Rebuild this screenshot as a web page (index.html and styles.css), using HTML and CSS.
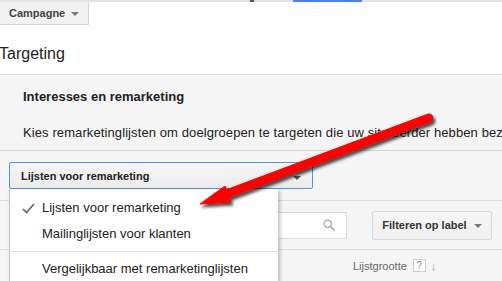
FILE: index.html
```html
<!DOCTYPE html>
<html>
<head>
  <title>Targeting</title>
  <link rel="stylesheet" href="styles.css">
</head>
<body>
  <div class="topbar">
    <span class="tab-mark"></span>
    <span class="tab-active"></span>
  </div>

  <button class="campaign-btn">Campagne <span class="caret"></span></button>

  <h1 class="page-title">Targeting</h1>

  <section class="panel">
    <h2>Interesses en remarketing</h2>
    <p>Kies remarketinglijsten om doelgroepen te targeten die uw site eerder hebben bezocht</p>

    <div class="panel-body">
      <div class="select-wrap">
        <button class="select">Lijsten voor remarketing <span class="caret"></span></button>
        <ul class="menu">
          <li>
            <svg class="check" width="13" height="11" viewBox="0 0 13 11">
              <path d="M1 6 L4.5 9.5 L12 1" fill="none" stroke="#666" stroke-width="1.7"/>
            </svg>
            Lijsten voor remarketing
          </li>
          <li>Mailinglijsten voor klanten</li>
          <li class="sep"></li>
          <li>Vergelijkbaar met remarketinglijsten</li>
        </ul>
      </div>

      <div class="toolbar">
        <div class="search">
          <svg width="12" height="12" viewBox="0 0 12 12">
            <circle cx="4.8" cy="4.8" r="3.6" fill="none" stroke="#bbb" stroke-width="1.8"/>
            <path d="M7.5 7.5 L11 11" stroke="#bbb" stroke-width="2.2" stroke-linecap="round"/>
          </svg>
        </div>
        <button class="filter-btn">Filteren op label <span class="caret"></span></button>
      </div>

      <div class="table-head">
        <span>Lijstgrootte</span>
        <span class="help">?</span>
        <span class="sort">&#8595;</span>
      </div>
    </div>
  </section>

  <!-- annotation arrow -->
  <svg class="annotation" width="502" height="281" viewBox="0 0 502 281">
    <defs>
      <filter id="shadow" x="-20%" y="-20%" width="140%" height="140%">
        <feDropShadow dx="2" dy="3" stdDeviation="1.5" flood-color="#000" flood-opacity="0.7"/>
      </filter>
    </defs>
    <g filter="url(#shadow)" fill="#f00" stroke="#f00">
      <line x1="429" y1="118" x2="224" y2="195" stroke-width="9" stroke-linecap="round"/>
      <polygon points="200,204 225,186 231,202" stroke-width="1" stroke-linejoin="round"/>
    </g>
  </svg>
</body>
</html>
```

FILE: styles.css
```css
* { box-sizing: border-box; margin: 0; padding: 0; }
body {
  font-family: 'Liberation Sans', Arial, sans-serif;
  background: #fff;
  color: #222;
  width: 502px;
  height: 281px;
  overflow: hidden;
  position: relative;
}

.topbar {
  display: flex;
  height: 2px;
  background: #e3e3e3;
}

.tab-mark {
  margin-left: 250px;
  width: 4px;
  background: #555;
}

.tab-active {
  margin-left: 39px;
  width: 69px;
  background: #4285f4;
}

.caret {
  display: inline-block;
  border-left: 4px solid transparent;
  border-right: 4px solid transparent;
  border-top: 4px solid #777;
  vertical-align: middle;
  margin-left: 4px;
}

button {
  font-family: inherit;
  cursor: pointer;
}

.campaign-btn {
  display: block;
  width: 89px;
  height: 23px;
  padding-left: 9px;
  text-align: left;
  font-size: 11px;
  font-weight: bold;
  color: #444;
  background: #f1f1f1;
  border: none;
  border-right: 1px solid #d6d6d6;
  border-bottom: 1px solid #d6d6d6;
}

.campaign-btn .caret {
  margin-left: 3px;
}

.page-title {
  font-size: 16px;
  font-weight: normal;
  line-height: 20px;
  margin: 19px 0 10px -1px;
  color: #222;
}

.panel {
  background: #f5f5f5;
  border-top: 1px solid #dcdcdc;
  height: 207px;
}

.panel h2 {
  font-size: 13px;
  line-height: 16px;
  padding: 14px 0 0 23px;
  color: #222;
}

.panel p {
  font-size: 13px;
  line-height: 16px;
  margin-top: 20px;
  padding-left: 23px;
  white-space: nowrap;
  letter-spacing: 0.1px;
  color: #222;
}

.panel-body {
  margin-top: 9px;
  border-top: 1px solid #d4d4d4;
  padding-top: 11px;
}

.select-wrap {
  position: relative;
  margin-left: 9px;
  width: 304px;
}

.select {
  display: flex;
  align-items: center;
  width: 304px;
  height: 27px;
  padding: 0 11px;
  font-size: 11px;
  font-weight: bold;
  color: #222;
  background: linear-gradient(#f6f6f6, #ebebeb);
  border: 1px solid #4d90fe;
  border-radius: 2px;
}

.select .caret {
  margin-left: auto;
  margin-top: 4px;
  border-top-color: #555;
}

.menu {
  position: absolute;
  top: 27px;
  left: 0;
  width: 269px;
  list-style: none;
  background: #fff;
  border-left: 1px solid #c8c8c8;
  box-shadow: 2px 2px 4px rgba(0,0,0,0.25);
  padding-top: 6px;
  z-index: 2;
}

.menu li {
  height: 26px;
  line-height: 26px;
  padding-left: 32px;
  font-size: 13px;
  color: #222;
  white-space: nowrap;
  position: relative;
}

.menu .check {
  position: absolute;
  left: 12px;
  top: 8px;
}

.menu li.sep {
  height: 1px;
  margin: 4px 0;
  background: #e2e2e2;
}

.toolbar {
  display: flex;
  align-items: center;
  margin-top: 11px;
  height: 50px;
  border-top: 1px solid #dcdcdc;
  border-bottom: 1px solid #dcdcdc;
  padding-left: 9px;
}

.search {
  display: flex;
  align-items: center;
  justify-content: flex-end;
  width: 338px;
  height: 27px;
  padding-right: 11px;
  background: #fff;
  border: 1px solid #dadada;
}

.filter-btn {
  margin-left: 25px;
  width: 120px;
  height: 29px;
  font-size: 11px;
  font-weight: bold;
  color: #333;
  background: linear-gradient(#f6f6f6, #f0f0f0);
  border: 1px solid #dadada;
  border-radius: 2px;
}

.table-head {
  display: flex;
  align-items: center;
  height: 31px;
  padding-left: 353px;
  font-size: 11px;
  color: #666;
}

.help {
  display: inline-block;
  width: 13px;
  height: 13px;
  margin-left: 6px;
  border: 1px solid #ccc;
  background: #fff;
  line-height: 11px;
  text-align: center;
  font-size: 10px;
  color: #888;
}

.sort {
  margin-left: 5px;
  color: #aaa;
  font-size: 11px;
}

.annotation {
  position: absolute;
  left: 0;
  top: 0;
  z-index: 5;
  pointer-events: none;
}
```
